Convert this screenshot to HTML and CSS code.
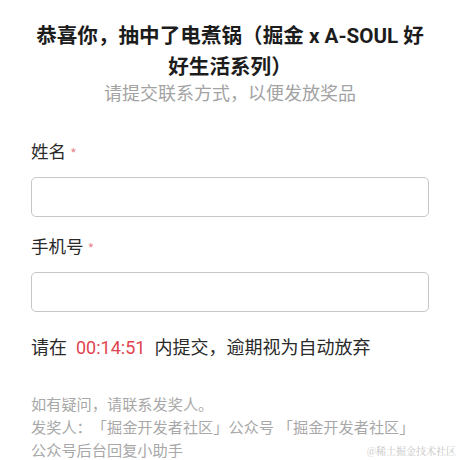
FILE: index.html
```html
<!DOCTYPE html>
<html lang="zh-CN">
<head>
<meta charset="utf-8">
<link rel="stylesheet" href="styles.css">
</head>
<body>
<div class="page">
  <div class="head">
    <h1 class="title">恭喜你，抽中了电煮锅（掘金 x A-SOUL 好好生活系列）</h1>
    <p class="subtitle">请提交联系方式，以便发放奖品</p>
  </div>
  <div class="form">
    <div class="field">
      <label class="label">姓名<span class="req">*</span></label>
      <input class="input" type="text">
    </div>
    <div class="field">
      <label class="label">手机号<span class="req">*</span></label>
      <input class="input" type="tel">
    </div>
  </div>
  <p class="countdown">请在<span class="time">00:14:51</span>内提交，逾期视为自动放弃</p>
  <div class="note">
    <p>如有疑问，请联系发奖人。</p>
    <p>发奖人：「掘金开发者社区」公众号 「掘金开发者社区」</p>
    <p>公众号后台回复小助手</p>
  </div>
</div>
<div class="watermark">@稀土掘金技术社区</div>
</body>
</html>
```
FILE: styles.css
```css
html, body {
  margin: 0;
  padding: 0;
  background: #fff;
  height: 100%;
  overflow: hidden;
}
body {
  font-family: Roboto, "Noto Sans CJK SC", sans-serif;
  color: #222;
  position: relative;
  text-spacing-trim: space-all;
}
.page {
  padding: 21px 31px 0;
}
.head {
  text-align: center;
}
.title {
  margin: 0;
  font-size: 20.6px;
  line-height: 31px;
  font-weight: 700;
  color: #1c1c1c;
}
.subtitle {
  margin: 0;
  font-size: 18px;
  line-height: 22px;
  color: #a3a3a3;
}
.form {
  margin-top: 34px;
  display: flex;
  flex-direction: column;
  gap: 17px;
}
.field {
  display: flex;
  flex-direction: column;
  gap: 12px;
}
.label {
  font-size: 17.5px;
  line-height: 26px;
  color: #2a2a2a;
  display: flex;
  align-items: center;
}
.req {
  color: #e57a82;
  font-size: 11px;
  margin-left: 5px;
  line-height: 1;
}
.input {
  box-sizing: border-box;
  width: 100%;
  height: 40px;
  margin: 0;
  border: 1px solid #c6c6c6;
  border-radius: 5px;
  background: #fff;
  outline: none;
}
.countdown {
  margin: 23px 0 0;
  font-size: 18px;
  line-height: 26px;
  color: #2a2a2a;
}
.time {
  color: #e0454f;
  margin: 0 9px 0 9px;
}
.note {
  margin-top: 33px;
  font-size: 15.2px;
  line-height: 23px;
  color: #a8a8a8;
}
.note p {
  margin: 0;
}
.watermark {
  position: absolute;
  right: 4px;
  bottom: 3px;
  font-family: "Noto Serif CJK SC", "Liberation Serif", serif;
  font-size: 10px;
  line-height: 12px;
  color: #c4c4c4;
  background: rgba(255,255,255,0.6);
}
```
